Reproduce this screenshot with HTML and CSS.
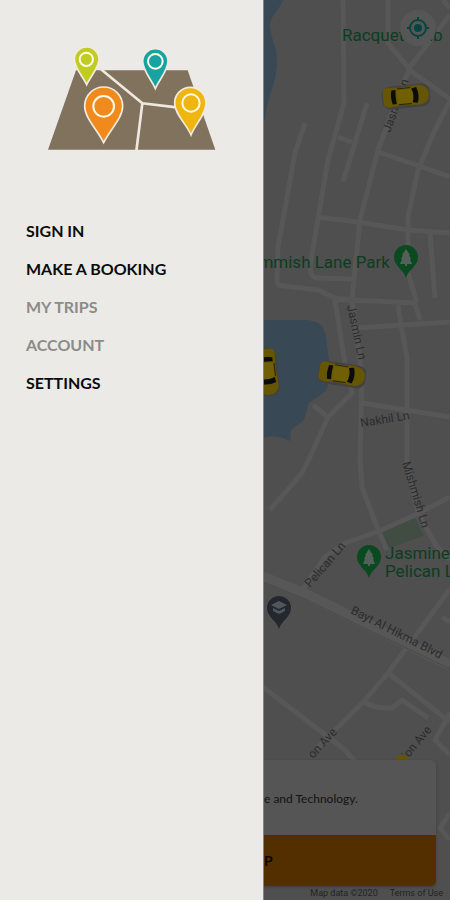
FILE: index.html
```html
<!DOCTYPE html>
<html lang="en">
<head>
<meta charset="utf-8">
<meta name="viewport" content="width=device-width, initial-scale=1">
<title>Taxi booking</title>
<link rel="stylesheet" href="styles.css">
</head>
<body>
<div class="app">
  <aside class="drawer">
    <svg class="logo" viewBox="0 0 555 360" aria-hidden="true">
      <path class="sheet" d="M108 91H443L526 329H24Z"/>
      <path class="fold" d="M182 87L307 190L410 202M307 190L289 333"/>
      <g class="pin">
        <path fill="#c0cd20" d="M140 134C128 108 103 84 103 58a37 37 0 0 1 74 0C177 84 152 108 140 134Z"/>
        <circle cx="139" cy="58" r="20"/>
        <path fill="#18a2a1" d="M346 146C334 118 308 92 308 64a38 38 0 0 1 76 0C384 92 358 118 346 146Z"/>
        <circle cx="346" cy="64" r="22"/>
        <path fill="#f18a1c" d="M191 308C172 268 134 235 134 198a57 57 0 0 1 114 0C248 235 210 268 191 308Z"/>
        <circle cx="191" cy="199" r="31"/>
        <path fill="#efb511" d="M453 285C439 251 404 223 404 189a47 47 0 0 1 94 0C498 223 467 251 453 285Z"/>
        <circle cx="453" cy="189" r="26"/>
      </g>
    </svg>
    <nav class="menu" aria-label="Main">
      <a href="#sign-in">SIGN IN</a>
      <a href="#booking">MAKE A BOOKING</a>
      <a class="muted" href="#trips">MY TRIPS</a>
      <a class="muted" href="#account">ACCOUNT</a>
      <a href="#settings">SETTINGS</a>
    </nav>
  </aside>
  <main class="stage">
    <svg class="map" viewBox="264 0 186 900" preserveAspectRatio="xMinYMin slice">
      <defs>
        <g id="car">
          <rect x="-24" y="-11" width="48" height="23" rx="8" fill="#424242"/>
          <path fill="#665502" d="M-23-6Q-22-10-17-10L-6-9L13-10Q23-9 23 0Q23 9 13 10L-6 9L-17 10Q-22 10-23 6Z"/>
          <path fill="#705f05" d="M-9-7H7V7H-9Z"/>
          <path fill="#0b0b0b" d="M-14-7L-10-7Q-11 0-10 7L-14 7Q-16 0-14-7ZM6-7L11-8Q14 0 11 8L6 7Q9 0 6-7Z"/>
          <path fill="none" stroke="#2b2503" d="M-8-8H5M-8 8H5"/>
        </g>
        <g id="park">
          <path fill="#0b4a20" d="M0 17C-2 9-12 5-12-4a12 12 0 0 1 24 0C12 5 2 9 0 17Z"/>
          <path fill="#55605a" d="M0-12L4-6H3L5-2H4L6 3H1V5H-1V3H-6L-4-2H-5L-3-6H-4Z"/>
        </g>
      </defs>
      <path class="water" d="M263 0H283C280 10 269 16 270 27C271 40 278 48 277 65C276 85 266 98 265 120H263ZM263 320H304Q325 320 326 338L329 360Q330 382 326 391L309 403L304 420L291 430L290 441Q276 434 263 438Z"/>
      <path class="green" d="M380 532L415 518L424 536L389 548Z"/>
      <g class="roads">
        <path d="M343 0L344 103L328 160L311 260Q308 278 318 278L352 279M367 103L343 182M338 137L352 142M305 123L295 153L278 247L277 280Q277 286 284 286L318 290L335 298L352 300"/>
        <path d="M388 0V43L412 72L450 99M450 15L410 67L393 110L378 150L360 220L352 300L362 377L360 460L362 487L377 527L387 550"/>
        <path d="M443 0L450 8M450 101L434 132L418 170L408 217V273L417 303M378 152L422 167L450 177M317 217L358 222L408 230L450 233M430 233L435 298"/>
        <path d="M335 300L346 370L352 393L328 417L310 457L302 473L270 510M313 405L328 417M335 300H352L415 303L420 320M398 305L402 330L407 357V463L418 513L437 547M355 328L450 322M362 403L450 417M335 298V305"/>
        <path d="M450 497L415 515L377 532L345 543L325 557L302 590M450 589L405 650L388 673L365 700L315 750M388 673L445 718L450 722M365 702Q373 709 392 708L402 700L428 718M263 687L345 750L358 765M442 617L450 622M450 713L435 740L450 755M450 813L440 828L450 840M437 547L450 560"/>
      </g>
      <path class="highway" d="M263 577L305 594L352 617L450 665"/>
      <path class="highway-line" d="M263 582L305 599L352 622L450 669"/>
      <g class="street">
        <text transform="translate(390 133) rotate(-70)">Jasmin Ln</text>
        <text transform="translate(347 306) rotate(78)">Jasmin Ln</text>
        <text transform="translate(361 427) rotate(-9)">Nakhil Ln</text>
        <text transform="translate(402 463) rotate(73)">Mishmish Ln</text>
        <text transform="translate(310 588) rotate(-49)">Pelican Ln</text>
        <text transform="translate(350 613) rotate(27)">Bayt Al Hikma Blvd</text>
        <text transform="translate(313 759) rotate(-47)">on Ave</text>
        <text transform="translate(407 760) rotate(-50)">ion Ave</text>
      </g>
      <g class="place">
        <text x="342" y="41">Racquet Club</text>
        <text x="390" y="268" text-anchor="end">mmish Lane Park</text>
        <text x="385" y="559">Jasmine</text>
        <text x="385" y="577">Pelican Ln</text>
      </g>
      <use href="#park" transform="translate(406 261)"/>
      <use href="#park" transform="translate(369 561)"/>
      <path fill="#22282d" d="M279 629C277 621 267 617 267 608a12 12 0 0 1 24 0C291 617 281 621 279 629Z"/>
      <path fill="#50565a" d="M279 601L287 605L279 609L271 605ZM273 608L279 611L285 608V611L279 614L273 611Z"/>
      <use href="#car" transform="translate(406 96) rotate(-6)"/>
      <use href="#car" transform="translate(342 374) rotate(9)"/>
      <use href="#car" transform="translate(267 372) rotate(83)"/>
      <ellipse cx="402" cy="760" rx="7" ry="5" fill="#665502"/>
    </svg>
    <button class="locate" aria-label="My location">
      <svg viewBox="0 0 24 24" aria-hidden="true">
        <circle cx="12" cy="12" r="8" fill="none" stroke="#06453f" stroke-width="2"/>
        <circle cx="12" cy="12" r="4" fill="#06453f"/>
        <path stroke="#06453f" stroke-width="2" d="M12 1V5M12 19V23M1 12H5M19 12H23"/>
      </svg>
    </button>
    <div class="bottom">
      <section class="card">
        <p class="address">e and Technology.</p>
        <button class="pickup">P</button>
      </section>
      <footer class="legal"><span>Map data ©2020</span><a href="#terms">Terms of Use</a></footer>
    </div>
  </main>
</div>
</body>
</html>
```
FILE: styles.css
```css
* { box-sizing: border-box; }

body {
  margin: 0;
  font-family: Lato, sans-serif;
  background: #4f4f4f;
}

.app {
  display: flex;
  min-height: 100vh;
}

.drawer {
  flex: none;
  width: min(264px, 80vw);
  padding: 40px 26px;
  background: #ebeae6;
  border-right: 1px solid #858585;
}

.logo {
  display: block;
  width: 185px;
  height: 120px;
  margin-left: 14px;
}

.sheet { fill: #80725c; }
.fold { fill: none; stroke: #efe8df; stroke-width: 8; }
.pin path { stroke: #f3ebdf; stroke-width: 5; }
.pin circle { fill: none; stroke: #fffbe9; stroke-width: 6; }

.menu {
  display: flex;
  flex-direction: column;
  margin-top: 52px;
}

.menu a {
  color: #0c0c0c;
  font-size: 16px;
  font-weight: 700;
  line-height: 38px;
  text-decoration: none;
}

.menu .muted { color: #8b8b89; }

.stage {
  position: relative;
  flex: 1;
  min-width: 0;
  display: flex;
  flex-direction: column;
  justify-content: flex-end;
  overflow: hidden;
}

.map {
  position: absolute;
  inset: 0;
  width: 100%;
  height: 100%;
}

.water { fill: #384855; }
.green { fill: #414d42; }
.roads { fill: none; stroke: #575757; stroke-width: 5; stroke-linejoin: round; }
.highway { fill: none; stroke: #575757; stroke-width: 11; }
.highway-line { fill: none; stroke: #4a4a4a; stroke-width: 1; }
.street { fill: #2c2c2c; font: 12px Roboto, sans-serif; }
.place { fill: #0c3d21; font: 17px Roboto, sans-serif; }

.locate {
  position: absolute;
  top: 10px;
  right: 14px;
  display: grid;
  place-items: center;
  width: 36px;
  height: 36px;
  padding: 0;
  border: 0;
  border-radius: 50%;
  background: #565656;
}

.locate svg { width: 24px; height: 24px; }

.bottom { position: relative; }

.card {
  margin-right: 14px;
  overflow: hidden;
  border-radius: 0 5px 5px 0;
  background: #555;
  box-shadow: 0 1px 3px #3c3c3c;
}

.address {
  margin: 0;
  padding: 30px 0 27px;
  color: #131313;
  font-size: 12px;
  line-height: 18px;
  white-space: nowrap;
}

.pickup {
  display: block;
  width: 100%;
  height: 51px;
  padding: 0;
  border: 0;
  background: #532f00;
  color: #0c0700;
  font: 700 14px Lato, sans-serif;
  text-align: left;
}

.legal {
  display: flex;
  justify-content: flex-end;
  gap: 12px;
  padding-right: 7px;
  color: #232323;
  font: 9px/14px Roboto, sans-serif;
  white-space: nowrap;
}

.legal a { color: inherit; text-decoration: none; }
```
